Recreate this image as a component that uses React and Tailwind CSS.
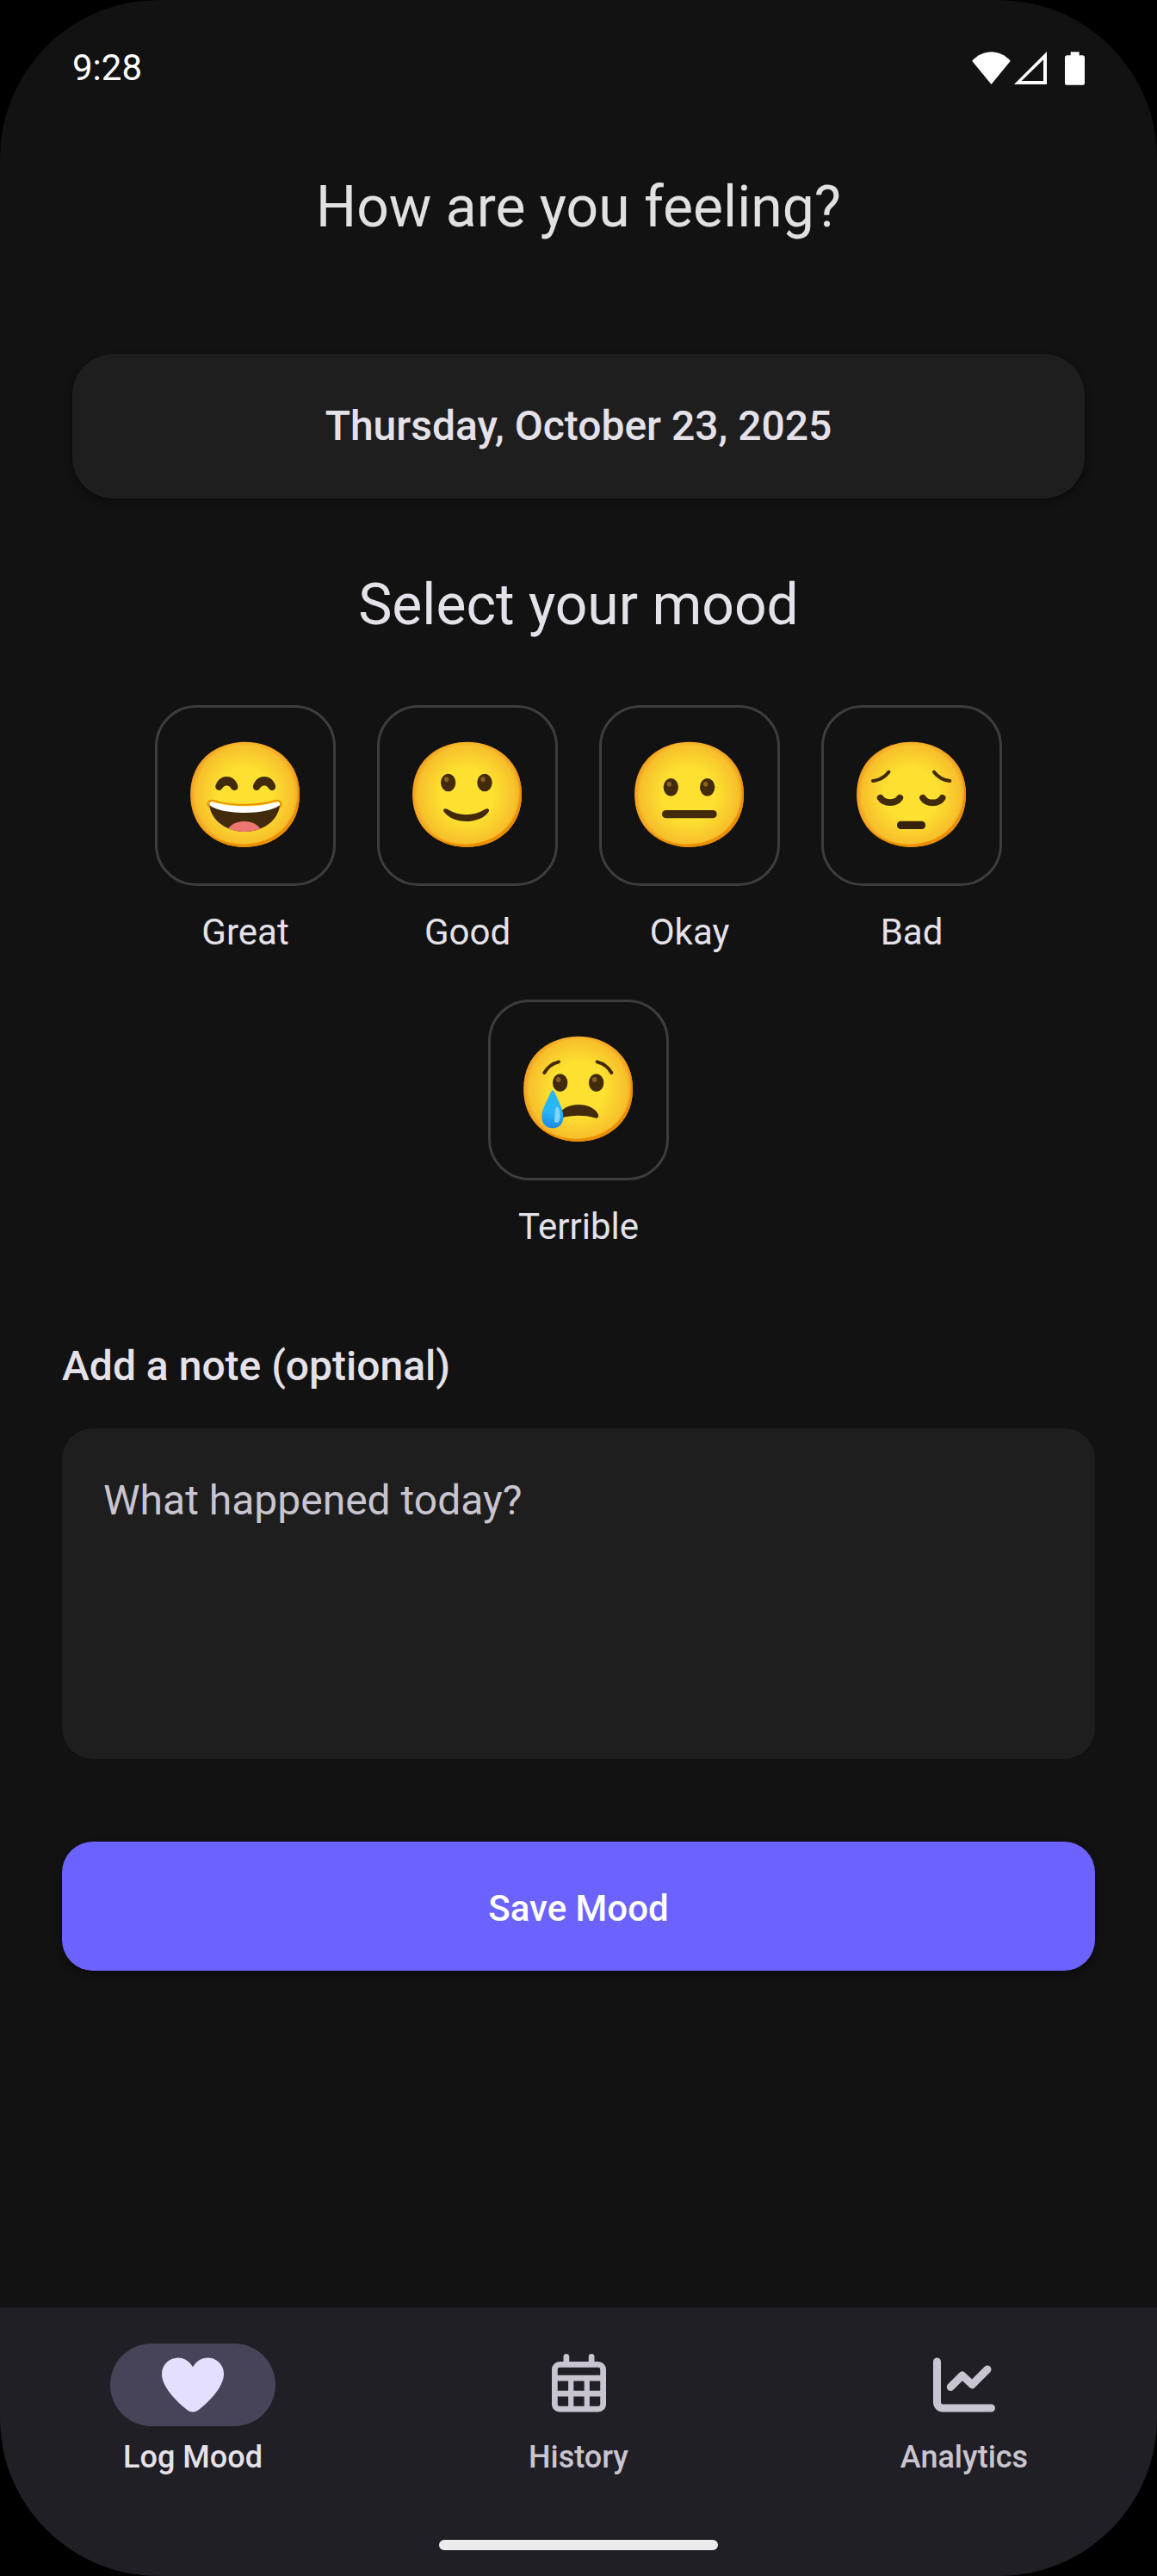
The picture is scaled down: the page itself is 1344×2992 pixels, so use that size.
import { useState } from "react";

const DARK = "#422B0D";

function Face({ id, children }) {
  return (
    <svg viewBox="0 0 420 420" className="size-[140px]" aria-hidden="true">
      <defs>
        <radialGradient id={id} cx="63.6" cy="62.9" r="56.96" gradientUnits="userSpaceOnUse">
          <stop offset="0.5" stopColor="#FDE030" />
          <stop offset="0.92" stopColor="#F7C02B" />
          <stop offset="1" stopColor="#F4A223" />
        </radialGradient>
      </defs>
      <g transform="scale(3.28125)">
        <path
          fill={`url(#${id})`}
          d="M63.6 118.8c-27.9 0-58-17.5-58-55.9S35.7 7 63.6 7c15.5 0 29.8 5.1 40.4 14.4 11.5 10.2 17.6 24.6 17.6 41.5s-6.1 31.2-17.6 41.4c-10.6 9.3-25 14.5-40.4 14.5z"
        />
        <path
          fill="#EB8F00"
          d="M111.49 29.67c5.33 8.6 8.11 18.84 8.11 30.23 0 16.9-6.1 31.2-17.6 41.4-10.6 9.3-25 14.5-40.4 14.5-18.06 0-37-7.35-48.18-22.94 10.76 17.66 31 25.94 50.18 25.94 15.4 0 29.8-5.2 40.4-14.5 11.5-10.2 17.6-24.5 17.6-41.4 0-12.74-3.47-24.06-10.11-33.23z"
        />
      </g>
      {children}
    </svg>
  );
}

function Eyes({ left, right, y }) {
  return (
    <>
      {[left, right].map((x) => (
        <g key={x}>
          <ellipse cx={x} cy={y} rx="26" ry="31" fill={DARK} />
          <ellipse cx={x - 6} cy={y - 11} rx="8" ry="9" fill="#896024" />
        </g>
      ))}
    </>
  );
}

function GreatFace() {
  const eye =
    "M252 354C241 352 238 341 243 332C250 315 264 306 280 306C296 306 310 315 317 332C322 343 318 354 306 354C298 354 296 348 292 343C286 336 274 336 268 343C263 349 260 355 252 354Z";
  return (
    <Face id="face-great">
      <g transform="translate(-135 -162)">
        <path d={eye} fill={DARK} />
        <path d={eye} fill={DARK} transform="translate(131 0)" />
        <clipPath id="great-mouth">
          <path d="M219 400C222 455 275 498 343 498C411 498 463 455 466 400C390 420 295 420 219 400Z" />
        </clipPath>
        <g clipPath="url(#great-mouth)">
          <rect x="210" y="390" width="270" height="120" fill={DARK} />
          <ellipse cx="341" cy="502" rx="60" ry="40" fill="#ED7770" />
        </g>
        <path
          d="M221 399C225 393 232 394 240 397C300 414 386 414 446 397C454 394 461 393 465 399L465 406C420 441 266 441 220 406Z"
          fill="#fff"
        />
        <path
          d="M217 410C210 396 220 386 236 391C300 409 386 409 448 391C464 386 474 396 467 411"
          fill="none"
          stroke="#EB8F00"
          strokeWidth="6"
          strokeLinecap="round"
        />
      </g>
    </Face>
  );
}

function GoodFace() {
  return (
    <Face id="face-good">
      <g transform="translate(-129 -162)">
        <Eyes left={272} right={399} y={327} />
        <path
          d="M256 427C252 418 262 415 270 420C310 445 360 445 400 420C408 415 418 419 413 428C400 449 368 462 335 462C302 462 271 450 256 427Z"
          fill={DARK}
        />
      </g>
    </Face>
  );
}

function OkayFace() {
  return (
    <Face id="face-okay">
      <g transform="translate(-153 -162)">
        <Eyes left={298} right={425} y={343} />
        <rect x="267" y="423" width="191" height="28" rx="14" fill={DARK} />
      </g>
    </Face>
  );
}

function BadFace() {
  return (
    <Face id="face-bad">
      <g transform="translate(-147 -162)" fill="none" stroke={DARK} strokeLinecap="round">
        <path d="M222 321C246 318 263 308 277 290" strokeWidth="12" />
        <path d="M490 321C466 318 449 308 435 290" strokeWidth="12" />
        <path d="M248 380C262 402 302 402 316 380" strokeWidth="23" />
        <path d="M396 380C410 403 450 403 464 380" strokeWidth="23" />
        <rect x="306" y="461" width="99" height="28" rx="13" fill="#35220B" stroke="none" />
      </g>
    </Face>
  );
}

function TerribleFace() {
  return (
    <Face id="face-terrible">
      <defs>
        <radialGradient id="tear" cx="275" cy="410" r="102" gradientUnits="userSpaceOnUse">
          <stop offset="0.45" stopColor="#29B6F6" />
          <stop offset="1" stopColor="#1E88E5" />
        </radialGradient>
      </defs>
      <g transform="translate(-156 -168)">
        <g fill="none" stroke={DARK} strokeWidth="12" strokeLinecap="round">
          <path d="M247 318C257 300 274 286 297 280" />
          <path d="M481 318C471 300 454 286 431 280" />
        </g>
        <Eyes left={302} right={428} y={353} />
        <path
          d="M296 470C302 444 334 429 365 429C398 429 428 443 435 464C438 474 431 478 422 475C385 465 345 465 305 476Z"
          fill={DARK}
        />
        <path
          d="M276 378C281 380 285 392 292 406C303 430 313 450 313 473C313 496 297 511 276 511C255 511 238 496 238 473C238 450 249 430 260 406C267 392 271 380 276 378Z"
          fill="url(#tear)"
        />
        <path
          d="M291 437C298 437 302 452 302 468C302 484 298 492 290 492C283 492 281 488 282 480C284 462 284 437 291 437Z"
          fill="#81D4FA"
        />
      </g>
    </Face>
  );
}

const MOODS = [
  { name: "Great", Icon: GreatFace },
  { name: "Good", Icon: GoodFace },
  { name: "Okay", Icon: OkayFace },
  { name: "Bad", Icon: BadFace },
  { name: "Terrible", Icon: TerribleFace },
];

function HeartIcon() {
  return (
    <svg viewBox="0 0 512 512" className="h-[72px]" fill="currentColor" aria-hidden="true">
      <path d="M241 87.1l15 20.7 15-20.7C296 52.5 336.2 32 378.9 32 452.4 32 512 91.6 512 165.1l0 2.6c0 112.2-139.9 242.5-212.9 298.2-12.4 9.4-27.6 14.1-43.1 14.1s-30.8-4.6-43.1-14.1C139.9 410.2 0 279.9 0 167.7l0-2.6C0 91.6 59.6 32 133.1 32 175.8 32 216 52.5 241 87.1z" />
    </svg>
  );
}

function CalendarIcon() {
  return (
    <svg viewBox="0 0 448 512" className="h-[72px]" fill="currentColor" aria-hidden="true">
      <rect x="96" y="0" width="48" height="96" rx="24" />
      <rect x="304" y="0" width="48" height="96" rx="24" />
      <path
        fillRule="evenodd"
        d="M64 64H384A64 64 0 0 1 448 128V416A64 64 0 0 1 384 480H64A64 64 0 0 1 0 416V128A64 64 0 0 1 64 64ZM64 112A16 16 0 0 0 48 128V176H400V128A16 16 0 0 0 384 112ZM48 224V304H136V224ZM180 224V304H268V224ZM312 224V304H400V224ZM48 352V416A16 16 0 0 0 64 432H136V352ZM180 352V432H268V352ZM312 352V432H384A16 16 0 0 0 400 416V352Z"
      />
    </svg>
  );
}

function ChartIcon() {
  return (
    <svg
      viewBox="0 0 512 512"
      className="h-[72px]"
      fill="none"
      stroke="currentColor"
      strokeWidth="64"
      strokeLinecap="round"
      strokeLinejoin="round"
      aria-hidden="true"
    >
      <path d="M32 64V400C32 426.500 53.500 448 80 448H480" />
      <path d="M144 274L240 178L322 254L448 128" />
    </svg>
  );
}

const TABS = [
  { name: "Log Mood", Icon: HeartIcon },
  { name: "History", Icon: CalendarIcon },
  { name: "Analytics", Icon: ChartIcon },
];

function StatusBar() {
  return (
    <div className="flex items-center justify-between px-[84px] pt-[49px] text-white">
      <span className="text-[42px] leading-[60px]">9:28</span>
      <div className="flex items-center">
        <svg viewBox="0 0 134 114" className="h-[38px] w-[45px]" fill="currentColor" aria-hidden="true">
          <path d="M0 32C38 -10 96 -10 134 32L67 114Z" />
        </svg>
        <svg viewBox="0 0 114 114" className="ml-1 size-[38px]" fill="currentColor" aria-hidden="true">
          <path fillRule="evenodd" d="M0 114H114V0ZM26 102H102V28Z" />
        </svg>
        <svg viewBox="0 0 69 116" className="ml-[21px] h-[39px] w-[23px]" fill="currentColor" aria-hidden="true">
          <path d="M20 0H50V12H61A8 8 0 0 1 69 20V108A8 8 0 0 1 61 116H8A8 8 0 0 1 0 108V20A8 8 0 0 1 8 12H20Z" />
        </svg>
      </div>
    </div>
  );
}

export default function App() {
  const [mood, setMood] = useState(null);
  const [tab, setTab] = useState("Log Mood");

  return (
    <div className="min-h-screen bg-black font-[Roboto,sans-serif]">
      <div className="flex min-h-screen flex-col overflow-hidden rounded-[184px] bg-[#121212] text-[#e5e1e9]">
        <StatusBar />

        <main className="flex grow flex-col px-[72px]">
          <h1 className="mt-[90px] text-center text-[66px] leading-[84px] text-[#e1e1e1]">
            How are you feeling?
          </h1>

          <button
            type="button"
            className="mx-3 mt-32 rounded-[48px] bg-[#1e1e1e] p-12 text-center text-[48px] leading-[72px] font-medium shadow-[0_4px_8px_rgba(0,0,0,0.4)]"
          >
            Thursday, October 23, 2025
          </button>

          <h2 className="mt-[82px] text-center text-[66px] leading-[84px]">Select your mood</h2>

          <div className="mt-[74px] flex flex-wrap justify-center gap-12 px-24">
            {MOODS.map(({ name, Icon }) => (
              <button
                key={name}
                type="button"
                aria-pressed={mood === name}
                onClick={() => setMood(name)}
                className="group flex flex-col items-center gap-6"
              >
                <span className="flex size-[210px] items-center justify-center rounded-[48px] border-3 border-[#3d3d3d] group-aria-pressed:border-[#6c63ff]">
                  <Icon />
                </span>
                <span className="text-[42px] leading-[60px]">{name}</span>
              </button>
            ))}
          </div>

          <label htmlFor="note" className="mt-24 text-[48px] leading-[72px] font-medium">
            Add a note (optional)
          </label>
          <textarea
            id="note"
            placeholder="What happened today?"
            className="mt-9 h-96 w-full resize-none rounded-[36px] bg-[#1e1e1e] p-12 text-[48px] leading-[72px] outline-none placeholder:text-[#c9c5d0]"
          />

          <button
            type="button"
            className="mt-24 mb-24 rounded-[36px] bg-[#6c63ff] pt-12 pb-[42px] text-[42px] leading-[60px] font-medium text-white shadow-[0_4px_8px_rgba(0,0,0,0.4)]"
          >
            Save Mood
          </button>
        </main>

        <footer className="bg-[#211f26] pt-[42px] pb-[30px]">
          <nav className="grid grid-cols-3">
            {TABS.map(({ name, Icon }) => (
              <button
                key={name}
                type="button"
                aria-current={tab === name ? "page" : undefined}
                onClick={() => setTab(name)}
                className="group flex flex-col items-center gap-3 text-[#c9c5d0] aria-[current=page]:text-[#e5e1e9]"
              >
                <span className="flex h-24 w-48 items-center justify-center rounded-full group-aria-[current=page]:bg-[#474459] group-aria-[current=page]:text-[#e4dfff]">
                  <Icon />
                </span>
                <span className="text-[36px] leading-[48px] font-medium">{name}</span>
              </button>
            ))}
          </nav>
          <div className="mx-auto mt-[72px] h-3 w-[324px] rounded-full bg-[#ececec]" />
        </footer>
      </div>
    </div>
  );
}
